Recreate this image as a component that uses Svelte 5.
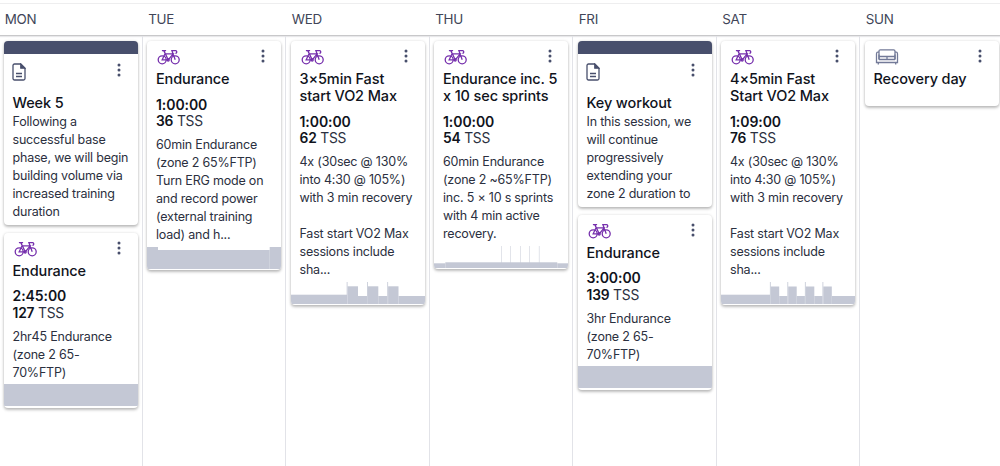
<script lang="ts">
	type Item = {
		kind: 'note' | 'ride' | 'rest';
		title: string;
		duration?: string;
		tss?: number;
		text?: string;
		// profile blocks as [x, width, height] on a 134x22 grid
		profile?: number[][];
	};

	const steady = [[0, 134, 22]];

	const vo2text =
		'4x (30sec @ 130%\ninto 4:30 @ 105%)\nwith 3 min recovery\n\nFast start VO2 Max\nsessions include\nsha...';

	const days: { name: string; items: Item[] }[] = [
		{
			name: 'MON',
			items: [
				{
					kind: 'note',
					title: 'Week 5',
					text: 'Following a\nsuccessful base\nphase, we will begin\nbuilding volume via\nincreased training\nduration'
				},
				{
					kind: 'ride',
					title: 'Endurance',
					duration: '2:45:00',
					tss: 127,
					text: '2hr45 Endurance\n(zone 2 65-\n70%FTP)',
					profile: steady
				}
			]
		},
		{
			name: 'TUE',
			items: [
				{
					kind: 'ride',
					title: 'Endurance',
					duration: '1:00:00',
					tss: 36,
					text: '60min Endurance\n(zone 2 65%FTP)\nTurn ERG mode on\nand record power\n(external training\nload) and h...',
					profile: [[0, 11, 22], [11, 111.7, 19], [122.7, 11.3, 22]]
				}
			]
		},
		{
			name: 'WED',
			items: [
				{
					kind: 'ride',
					title: '3×5min Fast\nstart VO2 Max',
					duration: '1:00:00',
					tss: 62,
					text: vo2text,
					profile: [
						[0, 56, 9.3],
						[55.7, 0.8, 22], [56.5, 10.5, 17.7], [67, 9, 8],
						[76, 0.8, 22], [76.8, 10.5, 17.7], [87.3, 9, 8],
						[96.3, 0.8, 22], [97.1, 10.4, 17.7], [107.5, 26.5, 8]
					]
				}
			]
		},
		{
			name: 'THU',
			items: [
				{
					kind: 'ride',
					title: 'Endurance inc. 5\nx 10 sec sprints',
					duration: '1:00:00',
					tss: 54,
					text: '60min Endurance\n(zone 2 ~65%FTP)\ninc. 5 × 10 s sprints\nwith 4 min active\nrecovery.',
					profile: [
						[0, 11.3, 4.7], [11.3, 112, 5.7], [123.3, 10.7, 4.7],
						[67, 0.5, 22], [76.3, 0.5, 22], [86, 0.5, 22], [95.2, 0.5, 22], [104.9, 0.5, 22]
					]
				}
			]
		},
		{
			name: 'FRI',
			items: [
				{
					kind: 'note',
					title: 'Key workout',
					text: 'In this session, we\nwill continue\nprogressively\nextending your\nzone 2 duration to'
				},
				{
					kind: 'ride',
					title: 'Endurance',
					duration: '3:00:00',
					tss: 139,
					text: '3hr Endurance\n(zone 2 65-\n70%FTP)',
					profile: steady
				}
			]
		},
		{
			name: 'SAT',
			items: [
				{
					kind: 'ride',
					title: '4×5min Fast\nStart VO2 Max',
					duration: '1:09:00',
					tss: 76,
					text: vo2text,
					profile: [
						[0, 49, 9.3],
						[48.9, 0.8, 22], [49.7, 8.5, 17.5], [58.2, 8.2, 8],
						[66.4, 0.8, 22], [67.2, 8.5, 17.5], [75.7, 8.2, 8],
						[83.9, 0.8, 22], [84.7, 8.6, 17.5], [93.3, 8.2, 8],
						[101.5, 0.8, 22], [102.3, 8.5, 17.5], [110.8, 23.2, 8]
					]
				}
			]
		},
		{ name: 'SUN', items: [{ kind: 'rest', title: 'Recovery day' }] }
	];
</script>

{#snippet icon(kind: string)}
	{#if kind === 'note'}
		<svg class="icon note-icon" width="14" height="18" viewBox="0 0 14 18">
			<path d="M2.5 1h6.2L13 5.3v10.2a1.5 1.5 0 0 1-1.5 1.5h-9A1.5 1.5 0 0 1 1 15.5v-13A1.5 1.5 0 0 1 2.5 1z" />
			<path class="fold" d="M8.8 1.2v4h4z" />
			<path d="M4 10.5h6M4 13.5h6" />
		</svg>
	{:else if kind === 'ride'}
		<svg class="icon ride-icon" width="24" height="16" viewBox="0 0 24 16">
			<circle cx="5.2" cy="10.8" r="4" />
			<circle cx="18.2" cy="10.8" r="4" />
			<path d="M5.2 10.8 8 4.8h8.200l-5 6zM6.900 1.900l4.300 8.900M4.900 1.700h4.200M18.200 10.800 14.900 1.700h3.600q1.300.1 1.300 1.300t-1.400 1.300" />
			<circle cx="11.2" cy="11" r="1" />
		</svg>
	{:else}
		<svg class="icon rest-icon" width="24" height="16" viewBox="0 0 24 16">
			<path d="M4 10.5V2.200Q4 .8 5.400.8h13.200Q20 .8 20 2.200v8.300M4 7.500h16M12 7.500v3M4 10.500h16" />
			<path d="M4 3.200Q1.500 2.500 1.500 5v8.500h21V5q0-2.500-2.500-1.800M4 10.500v-5M20 10.500v-5M3.300 13.500v2M20.700 13.500v2" />
		</svg>
	{/if}
{/snippet}

<div class="calendar">
	<header class="week-header">
		{#each days as day}
			<div class="day-name">{day.name}</div>
		{/each}
	</header>
	<div class="week">
		{#each days as day}
			<div class="day">
				{#each day.items as item}
					<article class="card {item.kind}">
						<div class="card-top">
							{@render icon(item.kind)}
							<svg class="menu" width="4" height="14" viewBox="0 0 4 14">
								<circle cx="2" cy="2" r="1.5" />
								<circle cx="2" cy="7" r="1.5" />
								<circle cx="2" cy="12" r="1.5" />
							</svg>
						</div>
						<h3>{item.title}</h3>
						{#if item.duration}
							<div class="stats">
								<div class="duration">{item.duration}</div>
								<div><b>{item.tss}</b> TSS</div>
							</div>
						{/if}
						{#if item.text}
							<p>{item.text}</p>
						{/if}
						{#if item.profile}
							<svg class="profile" viewBox="0 0 134 22" preserveAspectRatio="none">
								{#each item.profile as [x, w, h]}
									<rect {x} y={22 - h} width={w} height={h} />
								{/each}
							</svg>
						{/if}
					</article>
				{/each}
			</div>
		{/each}
	</div>
</div>

<style>
	:global(body) {
		background: #fff;
		overflow: hidden;
	}

	.calendar {
		box-sizing: border-box;
		width: 1004.5px;
		height: 466px;
		margin-left: -1px;
		padding-top: 3px;
		display: flex;
		flex-direction: column;
		font-family: Inter, 'Liberation Sans', sans-serif;
		color: #2b3040;
	}

	.week-header {
		display: grid;
		grid-template-columns: repeat(7, 1fr);
		height: 31px;
		border-top: 1px solid #eeeeef;
		border-bottom: 1px solid #c8c8ca;
		box-shadow: 0 1px 1px #e8e8ea;
	}

	.day-name {
		padding-left: 5.7px;
		font-size: 13.4px;
		letter-spacing: -0.25px;
		line-height: 31px;
		color: #414558;
	}

	.week {
		flex: 1;
		display: grid;
		grid-template-columns: repeat(7, 1fr);
	}

	.day {
		display: flex;
		flex-direction: column;
		gap: 8px;
		padding: 5.4px 5px 0 4.5px;
		border-right: 1px solid #e2e3e8;
		box-sizing: border-box;
		min-width: 0;
	}

	.card {
		width: 134px;
		border-radius: 4px;
		background: #fff;
		box-shadow:
			0 2px 3px rgba(0, 0, 0, 0.24),
			0 0 3px rgba(0, 0, 0, 0.12);
		overflow: hidden;
	}

	.card-top {
		display: flex;
		justify-content: space-between;
		align-items: flex-start;
		height: 20.6px;
		padding: 8px 16.5px 0 10px;
		box-sizing: content-box;
	}

	.note {
		border-top: 13px solid #484f6c;
		box-sizing: border-box;
		padding-bottom: 3.6px;
	}

	.note .card-top {
		height: 31px;
		padding: 9px 16.5px 0 8.5px;
	}

	.rest {
		height: 64.5px;
	}

	.icon {
		fill: none;
		stroke: #484f6c;
		stroke-width: 1.3;
	}

	.note-icon .fold {
		fill: #484f6c;
	}

	.ride-icon {
		stroke: #7630ad;
		stroke-width: 1.3;
	}

	.rest-icon {
		stroke: #737a98;
		stroke-width: 1.3;
	}

	.menu {
		fill: #484f6c;
	}

	h3 {
		margin: 0;
		padding-left: 9px;
		font-size: 14.5px;
		font-weight: 500;
		letter-spacing: -0.12px;
		line-height: 17.2px;
		color: #10131c;
		white-space: pre;
	}

	.note h3 {
		line-height: 18px;
	}

	.stats {
		padding: 8.4px 0 0 9px;
		font-size: 13.8px;
		letter-spacing: -0.2px;
		line-height: 17.7px;
	}

	.duration {
		font-size: 14px;
		letter-spacing: -0.08px;
	}

	.duration,
	.stats b {
		font-weight: 600;
		color: #10131c;
	}

	p {
		margin: 5.3px 0 0;
		padding-left: 9px;
		font-size: 12.5px;
		letter-spacing: -0.2px;
		line-height: 18px;
		white-space: pre;
	}

	.note p {
		margin-top: 1px;
	}

	.profile {
		display: block;
		width: 134px;
		height: 22px;
		margin: 2.3px 0 1.5px;
		fill: #c4c8d5;
	}
</style>
